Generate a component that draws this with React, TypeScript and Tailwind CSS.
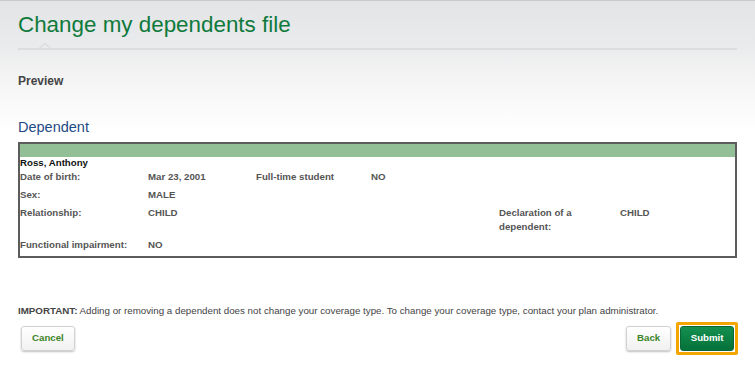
import React from "react";

const font = { fontFamily: '"Liberation Sans", Arial, sans-serif' };

function Row({ cells }: { cells: React.ReactNode[] }) {
  return (
    <div className="grid grid-cols-[128px_108px_115px_128px_121px_1fr] py-[2px] leading-[14px]">
      {cells.map((c, i) => (
        <div key={i}>{c}</div>
      ))}
    </div>
  );
}

export default function App() {
  return (
    <div
      style={font}
      className="w-[755px] h-[368px] overflow-hidden border-t border-[#c9cacc] bg-[linear-gradient(to_bottom,#e3e4e6_0px,#eaebed_45px,#f2f2f2_70px,#f9f9f9_100px,#ffffff_130px)] px-[18px]"
    >
      <h1 className="pt-[11px] text-[22.4px] leading-[26px] text-[#0f7a3c] font-normal">
        Change my dependents file
      </h1>
      <div className="relative mt-[10px] h-[2px] bg-[#dcdddd]">
        <svg
          className="absolute left-[19px] top-[-6px]"
          width="16"
          height="8"
          viewBox="0 0 16 8"
        >
          <polyline
            points="1,7.5 8,1.5 15,7.5"
            fill="none"
            stroke="#dcdddd"
            strokeWidth="1.5"
          />
        </svg>
      </div>
      <div className="mt-[24px] text-[12px] leading-[14px] font-bold text-[#444]">Preview</div>
      <h2 className="mt-[31px] text-[14.5px] leading-[17px] text-[#1f4c87] font-normal">Dependent</h2>
      <div className="mt-[6px] border-2 border-[#5c5c5c] pb-[2px] text-[9.7px] font-bold text-[#555]">
        <div className="h-[13px] bg-[#93bf96]" />
        <div className="leading-[11px] text-[#111]">Ross, Anthony</div>
        <Row cells={["Date of birth:", "Mar 23, 2001", "Full-time student", "NO", "", ""]} />
        <Row cells={["Sex:", "MALE", "", "", "", ""]} />
        <Row
          cells={[
            "Relationship:",
            "CHILD",
            "",
            "",
            <>
              Declaration of a
              <br />
              dependent:
            </>,
            "CHILD",
          ]}
        />
        <Row cells={["Functional impairment:", "NO", "", "", "", ""]} />
      </div>
      <p className="mt-[46px] text-[9.75px] leading-[14px] text-[#444]">
        <span className="font-bold">IMPORTANT:</span> Adding or removing a dependent does not change your
        coverage type. To change your coverage type, contact your plan administrator.
      </p>
      <div className="mt-[4px] flex items-center justify-between pl-[3px] mr-[-1px]">
        <button className="h-[25px] rounded-[3px] border border-[#d2d2d2] bg-[linear-gradient(to_bottom,#ffffff,#f1f1f1)] px-[10px] text-[9.7px] font-bold text-[#3c8527] shadow-[0_1px_2px_rgba(0,0,0,0.25)]">
          Cancel
        </button>
        <div className="flex items-center gap-[5px]">
          <button className="h-[25px] rounded-[3px] border border-[#d2d2d2] bg-[linear-gradient(to_bottom,#ffffff,#f1f1f1)] px-[10px] text-[9.7px] font-bold text-[#3c8527] shadow-[0_1px_2px_rgba(0,0,0,0.25)]">
            Back
          </button>
          <span className="flex rounded-[2px] border-[3px] border-[#f5a500] p-[1px]">
            <button className="h-[25px] rounded-[3px] border border-[#0a6636] bg-[linear-gradient(to_bottom,#15904f,#04713a)] px-[9.5px] text-[9.7px] font-bold text-white">
              Submit
            </button>
          </span>
        </div>
      </div>
    </div>
  );
}
